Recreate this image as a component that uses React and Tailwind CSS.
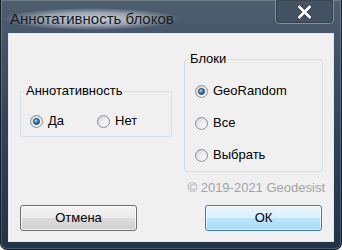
import React from "react";

function Radio({ checked, label, className = "" }) {
    return (
        <div className={"flex items-center gap-[5px] h-[16px] " + className}>
            <div className="w-[13px] h-[13px] rounded-full border border-[#8c8f91] bg-gradient-to-br from-[#cfd1d3] to-[#fbfbfb] flex items-center justify-center shrink-0">
                {checked ? (
                    <div className="w-[7px] h-[7px] rounded-full border border-[#173f66] bg-[radial-gradient(circle_at_35%_30%,#a6e2ff_0%,#2a86c8_45%,#0b3f73_100%)]" />
                ) : (
                    <div className="w-[9px] h-[9px] rounded-full bg-gradient-to-br from-[#dcdddf] to-[#fdfdfd]" />
                )}
            </div>
            <span>{label}</span>
        </div>
    );
}

function GroupBox({ title, className = "", children }) {
    return (
        <fieldset className={"border border-[#d5dfe5] rounded-[3px] pl-[3px] " + className}>
            <legend className="px-[2px] leading-[16px]">{title}</legend>
            {children}
        </fieldset>
    );
}

export default function App() {
    return (
        <div
            className="w-[342px] h-[250px] flex flex-col bg-gradient-to-b from-[#4f5e6f] via-[#33445a] to-[#223247] rounded-b-[7px] border-x border-b border-[#17212e] shadow-[inset_0_0_0_1px_rgba(255,255,255,0.18)] overflow-hidden"
            style={{ fontFamily: '"Liberation Sans", Arial, sans-serif' }}
        >
            {/* title bar */}
            <div className="h-[33px] flex items-start justify-between shrink-0">
                <div className="mt-[8px] ml-[2px] px-[7px] text-[15px] leading-[18px] text-[#1b1b1b] bg-[radial-gradient(closest-side,rgba(225,232,238,0.85),rgba(225,232,238,0.5)_60%,rgba(225,232,238,0))] py-[2px]">
                    Аннотативность блоков
                </div>
                <div className="mr-[7px] w-[59px] h-[24px] rounded-b-[5px] border border-t-0 border-[#8592a0] bg-[#3c4c5e]/60 shadow-[inset_0_0_0_1px_rgba(0,0,0,0.25)] flex items-center justify-center">
                    <svg width="15" height="14" viewBox="0 0 15 14">
                        <path d="M2.5 2 L12.5 12 M12.5 2 L2.5 12" stroke="#2a3340" strokeWidth="4" strokeLinecap="square" />
                        <path d="M2.5 2 L12.5 12 M12.5 2 L2.5 12" stroke="#ffffff" strokeWidth="2.7" strokeLinecap="square" />
                    </svg>
                </div>
            </div>

            {/* client area */}
            <div className="mx-[7px] h-[209px] border border-[#e3e7ec] bg-[#f0f0f0] text-[13px] text-black flex flex-col pt-[17px]">
                <div className="flex items-start pl-[11px] gap-[12px]">
                    <GroupBox title="Аннотативность" className="w-[152px] pb-[7px] pl-[3px] mt-[32px]">
                        <div className="flex pl-[6px] mt-[14px]">
                            <Radio checked label="Да" className="w-[67px]" />
                            <Radio label="Нет" />
                        </div>
                    </GroupBox>
                    <GroupBox title="Блоки" className="w-[139px] h-[121px] pl-[3px]">
                        <div className="flex flex-col gap-[16px] pl-[7px] mt-[16px]">
                            <Radio checked label="GeoRandom" />
                            <Radio label="Все" />
                            <Radio label="Выбрать" />
                        </div>
                    </GroupBox>
                </div>

                <div className="mt-[8px] pr-[8px] text-right text-[#a3a3a3] leading-[16px]">
                    © 2019-2021 Geodesist
                </div>

                <div className="mt-[9px] flex justify-between px-[11px]">
                    <button className="w-[117px] h-[26px] rounded-[3px] border border-[#707070] bg-[linear-gradient(to_bottom,#f3f3f3_0%,#ebebeb_48%,#dddddd_52%,#cfcfcf_100%)] shadow-[inset_0_0_0_1px_rgba(255,255,255,0.7)] text-[13px]">
                        Отмена
                    </button>
                    <button className="w-[117px] h-[26px] rounded-[3px] border border-[#3c7fb1] bg-[linear-gradient(to_bottom,#eaf6fd_0%,#d9f0fc_48%,#bee6fd_52%,#a7d9f5_100%)] shadow-[inset_0_0_0_1px_rgba(255,255,255,0.6)] text-[13px]">
                        ОК
                    </button>
                </div>
            </div>
        </div>
    );
}
